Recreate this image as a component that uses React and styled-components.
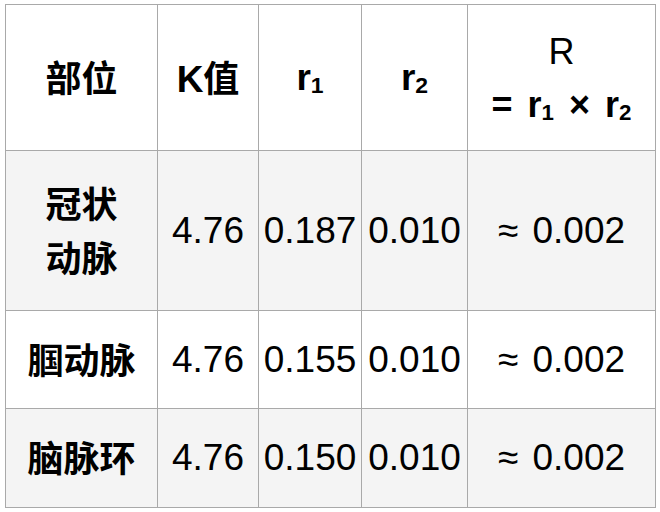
import React from 'react';
import styled, { createGlobalStyle } from 'styled-components';

const GlobalStyle = createGlobalStyle`
  html, body {
    margin: 0;
    padding: 0;
    background: #fff;
  }
  body {
    padding: 4px 5px;
    font-family: "Liberation Sans", "Noto Sans CJK SC", sans-serif;
    color: #000;
  }
`;

const Table = styled.table`
  border-collapse: collapse;
  table-layout: fixed;
  width: 651px;
  border: 1px solid #a9a9a9;
`;

const Row = styled.tr`
  height: ${props => props.h}px;
  background: ${props => (props.shaded ? '#f4f4f4' : '#fff')};
`;

const Head = styled.th`
  border: 1px solid #a9a9a9;
  padding: 0 4px;
  text-align: center;
  vertical-align: middle;
  font-size: 37px;
  font-weight: 700;
  line-height: 51px;
`;

const Cell = styled.td`
  border: 1px solid #a9a9a9;
  padding: 0 2px;
  text-align: center;
  vertical-align: middle;
  font-size: 37px;
  font-weight: ${props => (props.bold ? 700 : 400)};
  line-height: 50px;
  white-space: ${props => (props.wrap ? 'normal' : 'nowrap')};
`;

const Label = styled.span`
  font-family: "Noto Sans CJK SC", sans-serif;
  font-weight: 700;
  font-size: 36px;
  word-break: break-all;
`;

const Sub = styled.sub`
  font-size: 0.62em;
  vertical-align: -0.12em;
  line-height: 0;
`;

const Formula = styled.div`
  font-size: 36px;
  line-height: 53px;
  word-spacing: 5px;
  font-weight: ${props => (props.bold ? 700 : 400)};
`;

const Approx = styled.span`
  font-family: "Liberation Sans", sans-serif;
  margin-right: 4px;
`;

const rows = [
  { name: '冠状动脉', r1: '0.187', h: 160, shaded: true, narrow: true },
  { name: '腘动脉', r1: '0.155', h: 98, shaded: false },
  { name: '脑脉环', r1: '0.150', h: 99, shaded: true },
];

export default function App() {
  return (
    <>
      <GlobalStyle />
      <Table>
        <colgroup>
          <col style={{ width: 152 }} />
          <col style={{ width: 101 }} />
          <col style={{ width: 103 }} />
          <col style={{ width: 106 }} />
          <col style={{ width: 188 }} />
        </colgroup>
        <thead>
          <Row h={146}>
            <Head><Label>部位</Label></Head>
            <Head>K<Label>值</Label></Head>
            <Head>r<Sub>1</Sub></Head>
            <Head>r<Sub>2</Sub></Head>
            <Head>
              <Formula>R</Formula>
              <Formula bold>= r<Sub>1</Sub> × r<Sub>2</Sub></Formula>
            </Head>
          </Row>
        </thead>
        <tbody>
          {rows.map(row => (
            <Row key={row.name} h={row.h} shaded={row.shaded}>
              <Cell bold wrap>
                {row.narrow ? (
                  <Label>冠状<br />动脉</Label>
                ) : (
                  <Label>{row.name}</Label>
                )}
              </Cell>
              <Cell>4.76</Cell>
              <Cell>{row.r1}</Cell>
              <Cell>0.010</Cell>
              <Cell><Approx>≈</Approx> 0.002</Cell>
            </Row>
          ))}
        </tbody>
      </Table>
    </>
  );
}
